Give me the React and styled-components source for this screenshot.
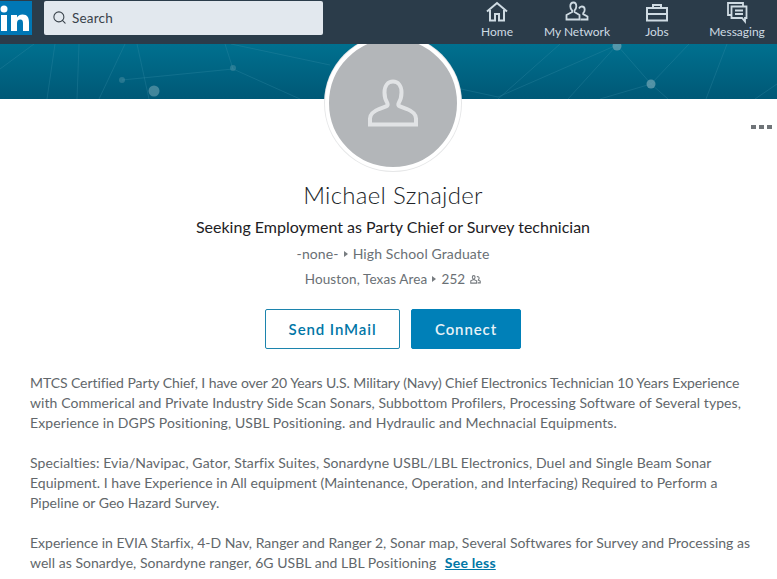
import React from "react";
import styled, { createGlobalStyle } from "styled-components";
import { Search } from "lucide-react";

const GlobalStyle = createGlobalStyle`
  html, body {
    margin: 0;
    padding: 0;
    background: #fff;
  }
  body {
    font-family: Lato, "Open Sans", "Liberation Sans", sans-serif;
    overflow: hidden;
  }
`;

const Page = styled.div`
  width: 777px;
  height: 579px;
  overflow: hidden;
`;

const Nav = styled.header`
  position: relative;
  z-index: 2;
  height: 44px;
  background: #2b3c4a;
  display: flex;
  align-items: flex-start;
`;

const Logo = styled.div`
  width: 32px;
  height: 34px;
  margin-top: 1px;
  background: #0077b5;
  overflow: hidden;
  flex-shrink: 0;
  svg {
    display: block;
  }
`;

const SearchBox = styled.div`
  width: 280px;
  height: 34px;
  margin: 1px 0 0 12px;
  background: #e2e8ee;
  border-radius: 2px;
  display: flex;
  align-items: center;
  gap: 5px;
  padding: 0 0 1px 8px;
  box-sizing: border-box;
  color: #39424a;
  font-size: 13.5px;
  letter-spacing: 0.2px;
`;

const NavItems = styled.nav`
  display: flex;
  margin-left: 134px;
`;

const NavItem = styled.div`
  width: ${(p) => p.$w}px;
  height: 44px;
  display: flex;
  flex-direction: column;
  align-items: center;
  color: #cfdbe3;
  font-size: 12px;
  svg {
    display: block;
  }
  span {
    line-height: 15px;
    white-space: nowrap;
  }
`;

const Banner = styled.div`
  height: 55px;
  background: linear-gradient(#00708f, #005876);
  overflow: hidden;
  svg {
    display: block;
  }
`;

const Profile = styled.main`
  position: relative;
  display: flex;
  flex-direction: column;
  align-items: center;
  padding: 0 21px 0 30px;
`;

const Avatar = styled.div`
  position: relative;
  z-index: 1;
  width: 128px;
  height: 128px;
  margin-top: -64px;
  border: 4px solid #fff;
  box-shadow: 0 0 0 1px #e6e7e8;
  border-radius: 50%;
  background: #b3b6b9;
  display: flex;
  align-items: center;
  justify-content: center;
`;

const MoreDots = styled.div`
  position: absolute;
  top: 26px;
  right: 5px;
  display: flex;
  gap: 3px;
  i {
    width: 5px;
    height: 4px;
    background: #6f7478;
  }
`;

const Name = styled.h1`
  margin: 9px 0 0;
  font-size: 24px;
  line-height: 30px;
  font-weight: 300;
  color: #202428;
  letter-spacing: 0.3px;
`;

const Headline = styled.div`
  margin-top: 7px;
  font-size: 16px;
  line-height: 20px;
  color: #1d2124;
`;

const Meta = styled.div`
  margin-top: ${(p) => p.$top}px;
  font-size: ${(p) => p.$size}px;
  line-height: 20px;
  letter-spacing: 0.12px;
  color: #6a7075;
  display: flex;
  align-items: center;
  gap: 5px;
  svg {
    display: block;
  }
`;

const Actions = styled.div`
  margin-top: 20px;
  display: flex;
  gap: 11px;
`;

const ActionButton = styled.button`
  height: 40px;
  width: ${(p) => p.$w}px;
  box-sizing: border-box;
  border-radius: 2px;
  border: 1px solid ${(p) => (p.$primary ? "#0080b8" : "#1c84ad")};
  background: ${(p) => (p.$primary ? "#0080b8" : "#fff")};
  color: ${(p) => (p.$primary ? "#e8f2f7" : "#0076a6")};
  font: 600 15px Lato, sans-serif;
  letter-spacing: 0.9px;
  padding: 0;
`;

const Summary = styled.div`
  align-self: stretch;
  margin-top: 24px;
  font-size: 14px;
  line-height: 20px;
  color: #62676b;
  p {
    margin: 0 0 20px;
    white-space: nowrap;
  }
  a {
    color: #0076a6;
    font-weight: 700;
    text-decoration: underline;
    letter-spacing: 0.2px;
    margin-left: 5px;
  }
`;

const Line = styled.span`
  display: block;
  letter-spacing: ${(p) => p.$ls}px;
`;

const HomeIcon = () => (
  <svg width="24" height="24" viewBox="0 0 24 24" fill="none" stroke="#cfdbe3" strokeWidth="2">
    <path d="M2 11.500 12 3l10 8.500M5 10v10.500h5V14h4v6.500h5V10" />
  </svg>
);

const NetworkIcon = () => (
  <svg width="26" height="24" viewBox="0 0 24 24" fill="none" stroke="#cfdbe3" strokeWidth="1.800">
    <path d="M8.500 2.500c-2 0-3.200 1.500-3.200 3.800 0 2 .8 3.400 1.800 4.200v1.500L1.500 15v4.500h13V15l-5-3v-1.500c1-.8 1.800-2.200 1.800-4.200 0-2.300-1.100-3.800-2.800-3.800z" />
    <path d="M14 8.500c.6-1.300 1.500-2 2.800-2 1.800 0 2.900 1.300 2.900 3.300 0 1.500-.6 2.600-1.500 3.300v1l4.300 2.400v3h-7" />
  </svg>
);

const JobsIcon = () => (
  <svg width="24" height="24" viewBox="0 0 24 24" fill="none" stroke="#cfdbe3" strokeWidth="2">
    <path d="M2 8h20v12.500H2zM2 14h20M8 8V5h8v3" />
  </svg>
);

const MessagingIcon = () => (
  <svg width="24" height="24" viewBox="0 0 24 24" fill="none" stroke="#cfdbe3" strokeWidth="1.800">
    <path d="M6 15H3V3h15v3" />
    <path d="M6.500 6.500h15V18H20v3.500L17 18H6.500zM10 10.500h8M10 14h8" />
  </svg>
);

// faint network of lines behind the banner
const BannerArt = () => (
  <svg width="777" height="55" viewBox="0 0 777 55">
    <g stroke="#3d93ab" strokeOpacity="0.28" strokeWidth="1" fill="none">
      <path d="M0 25 34 0M55 0 47 55M79 0 77 55M125 0 99 55M137 0 149 55M122 36 233 25M233 25 300 55M225 0 233 25M231 0 330 21" />
      <path d="M461 45 498 53M498 53 617 1M568 55 617 1M617 1 651 40M651 40 600 55M651 40 689 0M651 40 668 55M706 55 727 0M755 55 777 40M560 0 498 55" />
    </g>
    <g fill="#6ea3b3">
      <circle cx="122" cy="36" r="3" opacity="0.35" />
      <circle cx="233" cy="24" r="3" opacity="0.35" />
      <circle cx="154" cy="47" r="5.500" opacity="0.6" />
      <circle cx="617" cy="2" r="4.500" opacity="0.75" />
      <circle cx="651" cy="40" r="4.500" opacity="0.75" />
    </g>
  </svg>
);

const PersonIcon = () => (
  <svg width="50" height="48" viewBox="0 0 50 48" fill="none" stroke="#e1e3e5" strokeWidth="4">
    <path d="M2 45.500h46v-6c0-5-4-7.500-9-9.500l-7-2.500c-1.500-.8-2-2-1.300-3.500 1.700-2.800 2.800-6 2.800-10.500C33.500 6.500 30 2.500 25 2.500s-8.500 4-8.500 11c0 4.500 1.100 7.700 2.800 10.500.7 1.500.2 2.700-1.300 3.500L11 30c-5 2-9 4.500-9 9.500z" />
  </svg>
);

const ConnectionsIcon = () => (
  <svg width="11" height="9" viewBox="0 0 24 20" fill="none" stroke="#777c80" strokeWidth="2.500">
    <path d="M8 1.500c-2 0-3 1.500-3 3.500s1 3 2 4v1.500L1.500 13v5h13v-5L9 10.500V9c1-1 2-2 2-4s-1-3.500-3-3.500zM15 4c3-1 5 .5 5 3 0 1.500-.5 2.500-1.500 3.500v1l4 2v4H17" />
  </svg>
);

const Caret = () => (
  <svg width="4" height="6" viewBox="0 0 4 6">
    <path d="M0 0l4 3-4 3z" fill="#777c80" />
  </svg>
);

export default function App() {
  return (
    <Page>
      <GlobalStyle />
      <Nav>
        <Logo>
          <svg width="32" height="34" viewBox="0 0 32 34">
            <rect x="1" y="14" width="6" height="16" fill="#fff" />
            <circle cx="4" cy="8" r="3.500" fill="#fff" />
            <path d="M11 14h6v2.500c1-1.700 3-3 5.500-3 5 0 6.500 3 6.500 8V30h-6v-7.500c0-2.500-.5-4-2.700-4-2.300 0-3.300 1.500-3.300 4V30h-6z" fill="#fff" />
          </svg>
        </Logo>
        <SearchBox>
          <Search size={15} strokeWidth={1.700} color="#39424a" />
          Search
        </SearchBox>
        <NavItems>
          <NavItem $w={80}><HomeIcon /><span>Home</span></NavItem>
          <NavItem $w={80}><NetworkIcon /><span>My Network</span></NavItem>
          <NavItem $w={80}><JobsIcon /><span>Jobs</span></NavItem>
          <NavItem $w={80}><MessagingIcon /><span>Messaging</span></NavItem>
        </NavItems>
      </Nav>
      <Banner><BannerArt /></Banner>
      <Profile>
        <MoreDots><i /><i /><i /></MoreDots>
        <Avatar><PersonIcon /></Avatar>
        <Name>Michael Sznajder</Name>
        <Headline>Seeking Employment as Party Chief or Survey technician</Headline>
        <Meta $top={7} $size={14}>-none- <Caret /> High School Graduate</Meta>
        <Meta $top={5} $size={13.5}>Houston, Texas Area <Caret /> 252 <ConnectionsIcon /></Meta>
        <Actions>
          <ActionButton $w={135}>Send InMail</ActionButton>
          <ActionButton $w={110} $primary>Connect</ActionButton>
        </Actions>
        <Summary>
          <p>
            <Line $ls={-0.075}>MTCS Certified Party Chief, I have over 20 Years U.S. Military (Navy) Chief Electronics Technician 10 Years Experience</Line>
            <Line $ls={0.072}>with Commerical and Private Industry Side Scan Sonars, Subbottom Profilers, Processing Software of Several types,</Line>
            <Line $ls={0.11}>Experience in DGPS Positioning, USBL Positioning. and Hydraulic and Mechnacial Equipments.</Line>
          </p>
          <p>
            <Line $ls={0.1}>Specialties: Evia/Navipac, Gator, Starfix Suites, Sonardyne USBL/LBL Electronics, Duel and Single Beam Sonar</Line>
            <Line $ls={0.05}>Equipment. I have Experience in All equipment (Maintenance, Operation, and Interfacing) Required to Perform a</Line>
            <Line $ls={0}>Pipeline or Geo Hazard Survey.</Line>
          </p>
          <p>
            <Line $ls={0.018}>Experience in EVIA Starfix, 4-D Nav, Ranger and Ranger 2, Sonar map, Several Softwares for Survey and Processing as</Line>
            <Line $ls={0.04}>well as Sonardye, Sonardyne ranger, 6G USBL and LBL Positioning <a href="#less">See less</a></Line>
          </p>
        </Summary>
      </Profile>
    </Page>
  );
}
